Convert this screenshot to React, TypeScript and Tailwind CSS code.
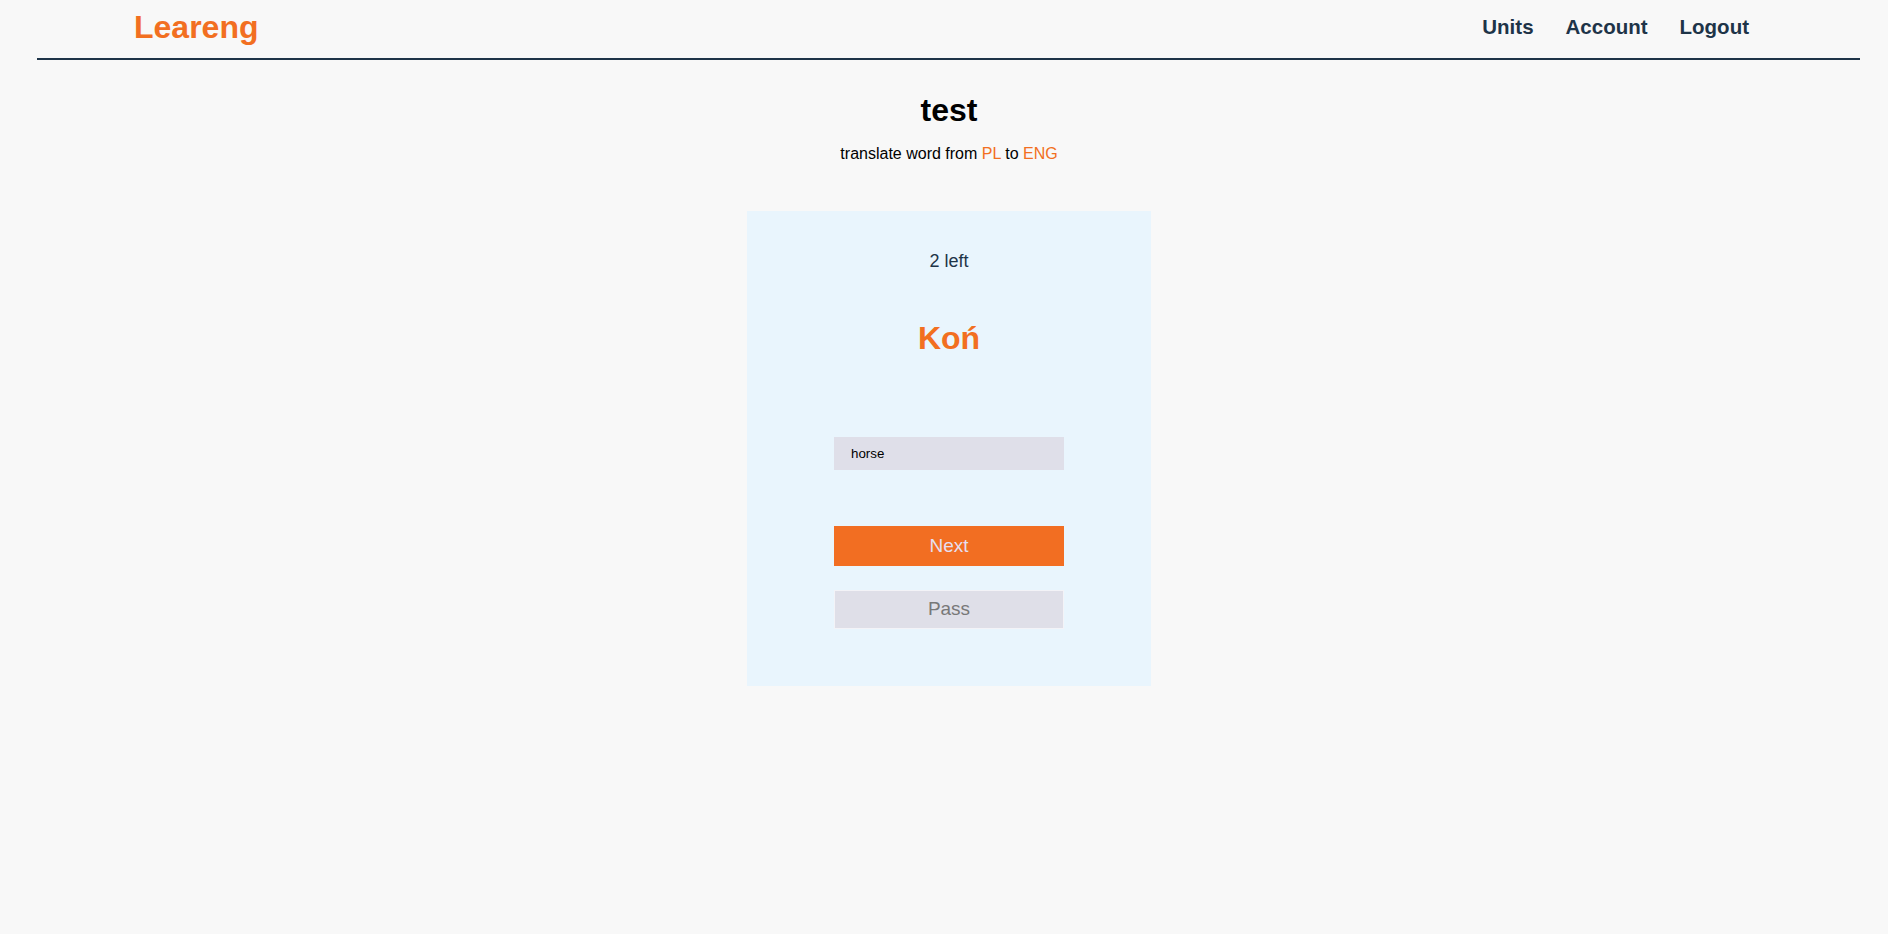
import { useState } from 'react'

export default function App() {
  const [answer, setAnswer] = useState('horse')

  return (
    <div className="min-h-screen bg-[#f8f8f8] font-['Liberation_Sans',Arial,sans-serif] text-black">
      <header className="ml-[37px] mr-[28px] h-[60px] pb-1 border-b-2 border-[#1e3448] flex items-center justify-between pl-[97px] pr-[111px]">
        <a href="#" className="text-[32px] leading-none font-bold text-[#f26f21]">Leareng</a>
        <nav className="flex items-center gap-[32px] text-[20.5px] leading-none font-bold text-[#1e3448]">
          <a href="#">Units</a>
          <a href="#">Account</a>
          <a href="#">Logout</a>
        </nav>
      </header>

      <main className="pl-[10px] flex flex-col items-center">
        <h1 className="mt-[34px] text-[32px] leading-none font-bold">test</h1>
        <p className="mt-[20px] text-[16px] leading-none">
          translate word from <span className="text-[#f26f21]">PL</span> to <span className="text-[#f26f21]">ENG</span>
        </p>

        <div className="mt-[49px] w-[404px] h-[475px] bg-[#e9f5fd] flex flex-col items-center pt-[41px]">
          <div className="text-[18px] leading-none text-[#1e3448]">2 left</div>
          <div className="mt-[52px] text-[32px] leading-none font-bold text-[#f26f21]">Koń</div>
          <input
            value={answer}
            onChange={e => setAnswer(e.target.value)}
            className="mt-[83px] w-[230px] h-[33px] bg-[#dfdfe9] pl-[17px] text-[13.33px] text-black outline-none"
          />
          <button className="mt-[56px] w-[230px] h-[40px] bg-[#f26e22] text-[19px] text-[#e6dff0]">
            Next
          </button>
          <button className="mt-[24px] w-[230px] h-[39px] bg-[#dfdfe8] border border-[#f3f3f7] text-[19px] text-[#787878]">
            Pass
          </button>
        </div>
      </main>
    </div>
  )
}
